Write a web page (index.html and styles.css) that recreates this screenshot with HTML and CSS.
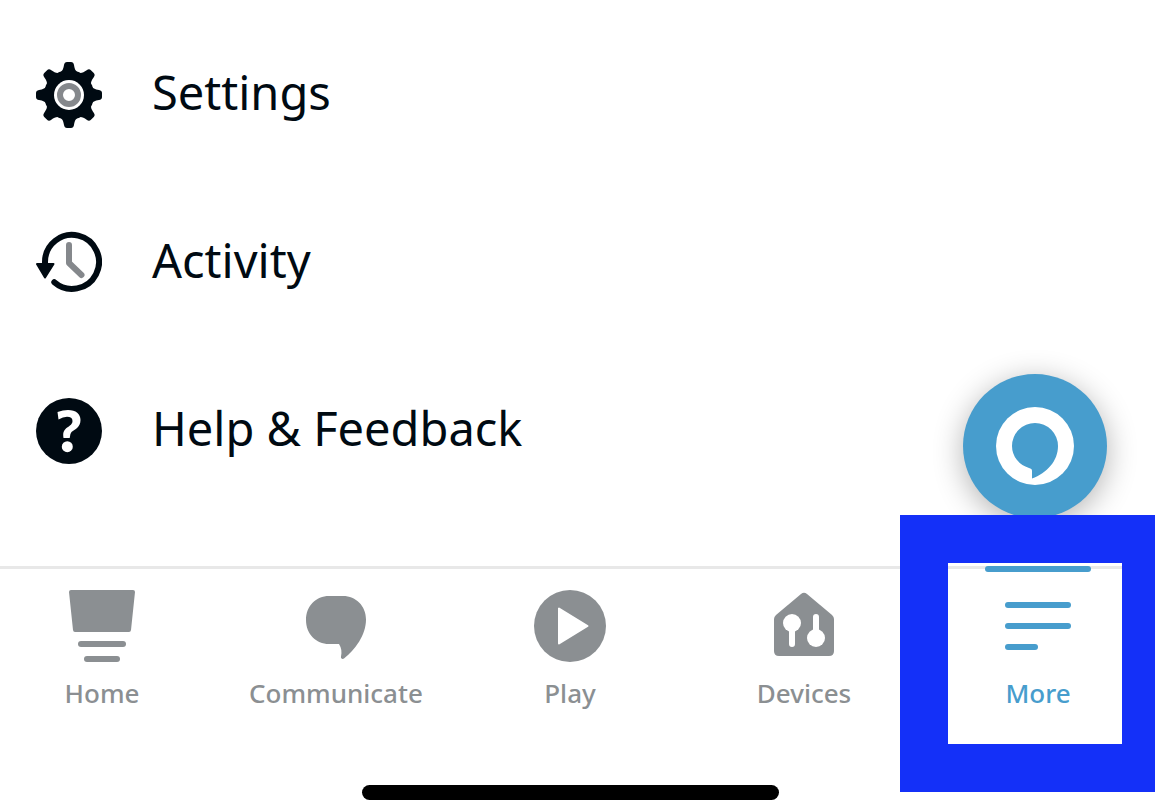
FILE: index.html
```html
<!DOCTYPE html>
<html lang="en">
<head>
<meta charset="utf-8">
<meta name="viewport" content="width=device-width, initial-scale=1">
<title>More</title>
<link rel="stylesheet" href="styles.css">
</head>
<body>
<div class="app">
  <main class="content">
    <ul class="menu">
      <li>
        <a class="menu-link" href="#settings">
          <svg class="menu-icon" viewBox="0 0 66 66" aria-hidden="true">
            <defs><path id="tooth" d="M23 11C26.500 9.500 27.300 7 28 3Q28.500 0 31 0H35Q37.500 0 38 3C38.700 7 39.500 9.500 43 11L33 16Z"/></defs>
            <circle cx="33" cy="33" r="25"/>
            <use href="#tooth"/>
            <use href="#tooth" transform="rotate(45 33 33)"/>
            <use href="#tooth" transform="rotate(90 33 33)"/>
            <use href="#tooth" transform="rotate(135 33 33)"/>
            <use href="#tooth" transform="rotate(180 33 33)"/>
            <use href="#tooth" transform="rotate(225 33 33)"/>
            <use href="#tooth" transform="rotate(270 33 33)"/>
            <use href="#tooth" transform="rotate(315 33 33)"/>
            <circle cx="33" cy="33" r="15" fill="#fff"/>
            <circle cx="33" cy="33" r="9" fill="none" stroke="#85888c" stroke-width="6"/>
          </svg>
          <span>Settings</span>
        </a>
      </li>
      <li>
        <a class="menu-link" href="#activity">
          <svg class="menu-icon" viewBox="0 -2 66 66" aria-hidden="true">
            <path d="M9 33V30A27 27 0 1 1 18.300 50.300" fill="none" stroke="#000a12" stroke-width="6" stroke-linecap="round"/>
            <path d="M1 32H17.500L9 45.500Z" stroke="#000a12" stroke-width="2" stroke-linejoin="round"/>
            <path d="M33 13V31L45.500 43" fill="none" stroke="#85888c" stroke-width="6" stroke-linecap="round" stroke-linejoin="round"/>
          </svg>
          <span>Activity</span>
        </a>
      </li>
      <li>
        <a class="menu-link" href="#help">
          <svg class="menu-icon" viewBox="0 0 66 66" aria-hidden="true">
            <circle cx="33" cy="33" r="33"/>
            <path d="M21.500 14Q27 12 32 12C40 12 44.500 16 44.500 22C44.500 29 39 31.500 35.500 34Q34 35.500 33.700 40H27.500C27 36 27 33.500 29.500 31C32 28.500 36.500 27 36.500 23C36.500 20 34.500 18.700 31 18.700Q27 18.700 22.500 21.500Z" fill="#fff"/>
            <circle cx="31.300" cy="48.700" r="5.500" fill="#fff"/>
          </svg>
          <span>Help &amp; Feedback</span>
        </a>
      </li>
    </ul>
    <button class="assistant" type="button" aria-label="Alexa">
      <svg viewBox="0 0 144 144" aria-hidden="true">
        <circle cx="72" cy="72" r="39" fill="#fff"/>
        <path d="M72 49A23 23 0 0 1 95 72C95 87 84 99 69 104.500V97C69 95 68 94.500 66 94A23 23 0 0 1 49 72A23 23 0 0 1 72 49Z" fill="#479dcd"/>
      </svg>
    </button>
  </main>
  <nav class="tabs" aria-label="Main">
    <a class="tab" href="#home">
      <svg class="tab-icon" viewBox="0 0 72 72" aria-hidden="true">
        <path d="M5 0H67Q69 0 69 2L65 40Q64.800 42 63 42H9Q7.200 42 7 40L3 2Q3 0 5 0Z"/>
        <rect x="12" y="51" width="48" height="6" rx="3"/>
        <rect x="18" y="66" width="36" height="6" rx="3"/>
      </svg>
      <span>Home</span>
    </a>
    <a class="tab" href="#communicate">
      <svg class="tab-icon" viewBox="0 0 72 72" aria-hidden="true">
        <path d="M29 6H43C56 6 66 16 66 29.500C66 45 55 60 44 68.500C42.500 69.600 40.500 68.500 41 66.500C42 62 41.500 58 39 54H29C16 54 6 44 6 30S16 6 29 6Z"/>
      </svg>
      <span>Communicate</span>
    </a>
    <a class="tab" href="#play">
      <svg class="tab-icon" viewBox="0 0 72 72" aria-hidden="true">
        <circle cx="36" cy="36" r="36"/>
        <path d="M25 18.500V53.500L53.500 36Z" fill="#fff" stroke="#fff" stroke-width="2" stroke-linejoin="round"/>
      </svg>
      <span>Play</span>
    </a>
    <a class="tab" href="#devices">
      <svg class="tab-icon" viewBox="0 0 72 72" aria-hidden="true">
        <path d="M33 4Q36 1.500 39 4L64 25Q66 26.800 66 29V61Q66 66 61 66H11Q6 66 6 61V29Q6 26.800 8 25Z"/>
        <g fill="#fff" stroke="#fff">
          <circle cx="24" cy="33" r="9" stroke="none"/>
          <circle cx="48" cy="48" r="9" stroke="none"/>
          <path d="M24 36V54M48 45V27" stroke-width="6" stroke-linecap="round"/>
        </g>
      </svg>
      <span>Devices</span>
    </a>
    <a class="tab tab-active" href="#more" aria-current="page">
      <svg class="tab-icon" viewBox="0 0 72 72" aria-hidden="true">
        <rect x="3" y="12" width="66" height="6" rx="3"/>
        <rect x="3" y="33" width="66" height="6" rx="3"/>
        <rect x="3" y="54" width="33" height="6" rx="3"/>
      </svg>
      <span>More</span>
    </a>
    <div class="highlight"></div>
  </nav>
  <div class="home-bar"></div>
</div>
</body>
</html>
```
FILE: styles.css
```css
* {
  box-sizing: border-box;
}

body {
  margin: 0;
  overflow-x: hidden;
  background: #fff;
  color: #000a12;
  font-family: "Noto Sans", "Open Sans", sans-serif;
}

/* The screen runs a little past the left edge of the window. */
.app {
  display: flex;
  flex-direction: column;
  min-height: 100vh;
  margin-left: -15px;
}

.content {
  position: relative;
  flex: 1;
}

.menu {
  margin: 0;
  padding: 11px 0 0;
  list-style: none;
}

.menu-link {
  display: flex;
  align-items: center;
  gap: 50px;
  height: 168px;
  padding: 0 51px;
  color: inherit;
  font-size: 47px;
  line-height: 64px;
  text-decoration: none;
}

.menu-link span {
  padding-bottom: 6px;
}

.menu-icon {
  flex: none;
  width: 66px;
  height: 66px;
  fill: #000a12;
}

.assistant {
  position: absolute;
  right: 48px;
  bottom: 48px;
  width: 144px;
  height: 144px;
  padding: 0;
  border: 0;
  border-radius: 50%;
  background: #479dcd;
  box-shadow: 0 6px 30px rgba(0, 0, 0, 0.3);
}

.assistant svg {
  display: block;
}

.tabs {
  position: relative;
  display: grid;
  grid-template-columns: repeat(5, 1fr);
  height: 219px;
  border-top: 3px solid #e8e8e8;
  background: #fff;
}

.tab {
  position: relative;
  display: flex;
  flex-direction: column;
  align-items: center;
  gap: 13px;
  padding-top: 21px;
  color: #8b8f92;
  fill: currentColor;
  font-size: 26px;
  font-weight: 500;
  line-height: 36px;
  text-decoration: none;
}

.tab-icon {
  width: 72px;
  height: 72px;
}

.tab-active {
  color: #479dcd;
}

.tab-active::before {
  content: "";
  position: absolute;
  top: -3px;
  width: 106px;
  height: 6px;
  border-radius: 3px;
  background: currentColor;
}

.highlight {
  position: absolute;
  top: -54px;
  right: -15px;
  width: 270px;
  height: 277px;
  border: 48px solid #1430f8;
  pointer-events: none;
}

.home-bar {
  align-self: center;
  width: 417px;
  height: 15px;
  border-radius: 8px;
  background: #000;
}
```
